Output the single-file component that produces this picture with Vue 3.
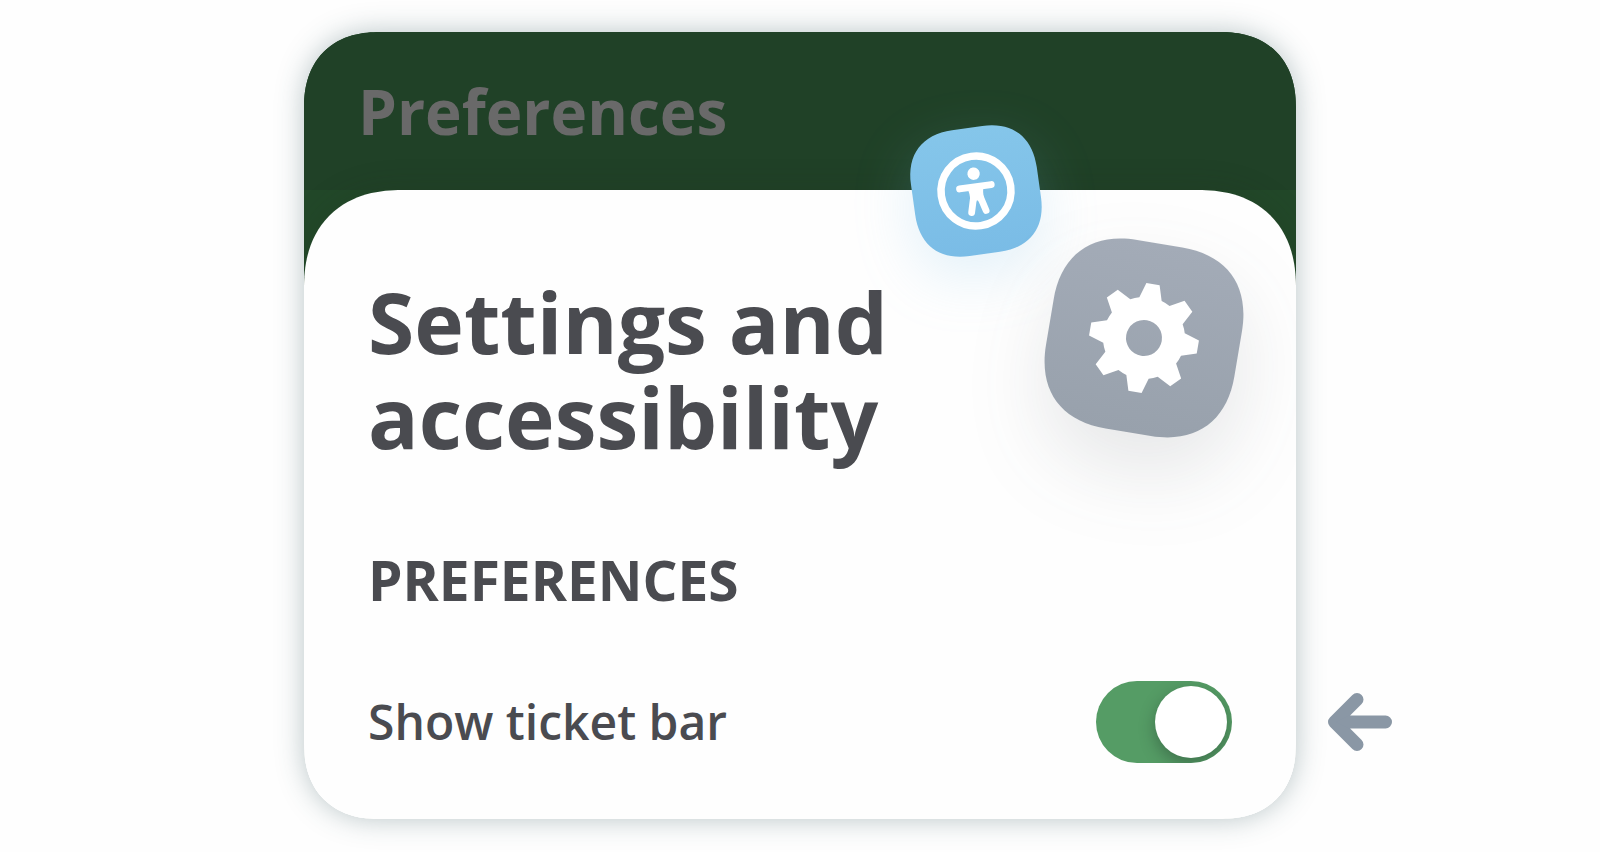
<script setup>
import { ref } from 'vue'

const showTicketBar = ref(true)

const point = (radius, degrees) => {
  const a = (degrees * Math.PI) / 180
  return `${(radius * Math.sin(a)).toFixed(2)} ${(-radius * Math.cos(a)).toFixed(2)}`
}

// Eight trapezoid teeth around a round hub
const teeth = Array.from({ length: 8 }, (_, i) => i * 45)
  .map((d) => `${point(41, d - 16)} L${point(55, d - 7)} L${point(55, d + 7)} L${point(41, d + 16)}`)
  .join(' A41 41 0 0 1 ')
const gearPath = `M${teeth} A41 41 0 0 1 ${point(41, -16)}Z M18 0 A18 18 0 1 0 -18 0 A18 18 0 1 0 18 0Z`

const tilePath =
  'M-12 -50 H12 C36 -50 50 -36 50 -12 V12 C50 36 36 50 12 50 H-12 C-36 50 -50 36 -50 12 V-12 C-50 -36 -36 -50 -12 -50Z'
</script>

<template>
  <main class="stage">
    <section class="card">
      <header class="bar">
        <p class="bar-title">Preferences</p>
      </header>

      <div class="sheet">
        <svg class="tile tile-access" viewBox="-70 -70 140 140" aria-hidden="true">
          <defs>
            <linearGradient id="blue" x1="0" y1="0" x2="0" y2="1">
              <stop offset="0" stop-color="#85c6ea" />
              <stop offset="1" stop-color="#7abce6" />
            </linearGradient>
          </defs>
          <g transform="rotate(-8)">
            <path :d="tilePath" fill="url(#blue)" transform="scale(1.27)" />
            <circle r="35" fill="none" stroke="#fff" stroke-width="7.5" />
            <circle cy="-17.5" r="6.2" fill="#fff" />
            <path d="M-16 -4.3 H16 M-3.6 7 L-7.3 20.7 M3.6 7 L7.3 20.7" stroke="#fff" stroke-width="6.8" stroke-linecap="round" fill="none" />
            <path d="M-8 -3 H8 Q6.4 1 7 8 L2 12 L0.8 9.6 H-0.8 L-2 12 L-7 8 Q-6.4 1 -8 -3Z" fill="#fff" />
          </g>
        </svg>
        <svg class="tile tile-gear" viewBox="-105 -105 210 210" aria-hidden="true">
          <defs>
            <linearGradient id="slate" x1="0" y1="0" x2="0" y2="1">
              <stop offset="0" stop-color="#a3abb7" />
              <stop offset="1" stop-color="#98a1ac" />
            </linearGradient>
          </defs>
          <g transform="rotate(9.5)">
            <path :d="tilePath" fill="url(#slate)" transform="scale(1.91)" />
            <path :d="gearPath" fill="#fff" fill-rule="evenodd" />
          </g>
        </svg>

        <h1 class="title">Settings and accessibility</h1>
        <h2 class="subtitle">PREFERENCES</h2>
        <div class="row">
          <label class="row-label" for="ticket-bar">Show ticket bar</label>
          <input id="ticket-bar" v-model="showTicketBar" class="switch" type="checkbox" role="switch" />
        </div>
      </div>
    </section>

    <svg class="pointer" viewBox="0 0 64 58" aria-hidden="true">
      <path d="M57.5 29 H10 M29 6.5 L6.5 29 L29 51.5" fill="none" stroke="#8a97a5" stroke-width="13" stroke-linecap="round" stroke-linejoin="round" />
      <path d="M8 29 L22 22 V36Z" fill="#8a97a5" />
    </svg>
  </main>
</template>

<style>
body {
  margin: 0;
  background: #fefefe;
}
</style>

<style scoped>
.stage {
  display: grid;
  grid-template-columns: 1fr 62% 1fr;
  align-content: start;
  padding: 32px 0;
  font-family: "Open Sans", "Noto Sans", sans-serif;
  color: #4a4b50;
}

.card {
  grid-column: 2;
  overflow: hidden;
  border-radius: 72px;
  background: linear-gradient(#224829 50%, #fefefe 50%);
  box-shadow: 0 0 28px rgba(50, 85, 90, 0.34);
}

.bar {
  display: flex;
  align-items: center;
  height: 158px;
  padding: 0 54px;
  box-sizing: border-box;
  background: #204127;
}

.bar-title {
  margin: 0;
  font-size: 62px;
  line-height: 80px;
  font-weight: 700;
  color: #696969;
}

.sheet {
  position: relative;
  padding: 84px 64px 56px;
  border-radius: 88px 88px 0 0;
  background: #fefefe;
  box-shadow: 0 0 32px rgba(32, 50, 30, 0.2);
}

@supports (corner-shape: superellipse(1.3)) {
  .card {
    border-radius: 76px;
    corner-shape: superellipse(1.2);
  }

  .sheet {
    border-radius: 98px 98px 0 0;
    corner-shape: superellipse(1.2);
  }
}

.tile {
  position: absolute;
}

.tile-access {
  top: -69px;
  right: 250px;
  width: 140px;
  height: 140px;
  filter: drop-shadow(0 20px 28px rgba(122, 188, 230, 0.2));
}

.tile-gear {
  top: 43px;
  right: 47px;
  width: 210px;
  height: 210px;
  filter: drop-shadow(0 36px 40px rgba(60, 65, 75, 0.12));
}

.title {
  max-width: 560px;
  margin: 0 0 84px;
  font-size: 84px;
  line-height: 95px;
  font-weight: 700;
}

.subtitle {
  margin: 0 0 69px;
  font-size: 55px;
  line-height: 64px;
  font-weight: 700;
}

.row {
  display: flex;
  align-items: center;
  justify-content: space-between;
}

.row-label {
  font-size: 48px;
  line-height: 64px;
  font-weight: 600;
}

.switch {
  appearance: none;
  display: flex;
  align-items: center;
  flex: none;
  width: 136px;
  height: 82px;
  margin: 0;
  padding: 0 5px;
  box-sizing: border-box;
  overflow: hidden;
  border-radius: 41px;
  background: #aab1b8;
  cursor: pointer;
}

.switch::before {
  content: "";
  width: 72px;
  height: 72px;
  border-radius: 50%;
  background: #fff;
  box-shadow: 0 6px 16px rgba(30, 50, 40, 0.4);
}

.switch:checked {
  justify-content: flex-end;
  background: #559c65;
}

.pointer {
  align-self: end;
  width: 64px;
  height: 58px;
  margin: 0 0 68px 32px;
}
</style>
